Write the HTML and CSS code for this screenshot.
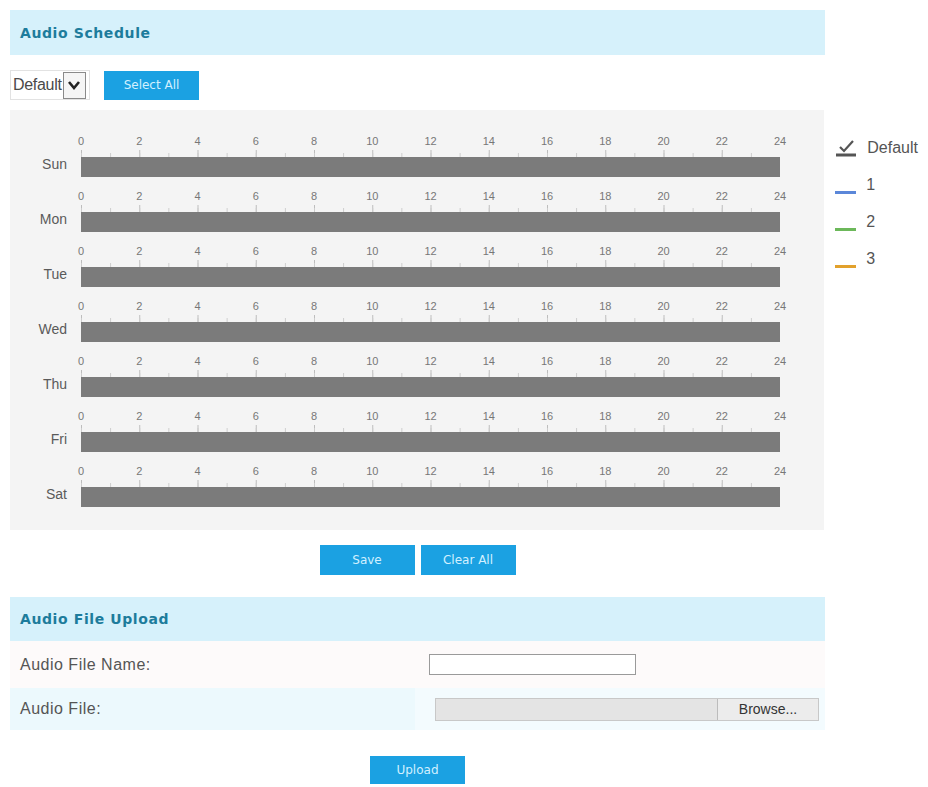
FILE: index.html
```html
<!doctype html>
<html lang="en">
    <head>
        <meta charset="UTF-8" />
        <title>Audio</title>
        <link rel="stylesheet" href="styles.css">
    </head>
    <body>
        <div class="section-head">Audio Schedule</div>

        <div class="toolbar">
            <div class="fake-select">
                <span class="fake-select-text">Default</span>
                <span class="fake-select-arrow">
                    <svg width="14" height="10" viewBox="0 0 14 10"><polyline points="2,2 7,8 12,2" fill="none" stroke="#222" stroke-width="2.6"/></svg>
                </span>
            </div>
            <button class="btn">Select All</button>
        </div>

        <div class="schedule-wrap">
            <div class="schedule">
                <div class="day">
                    <div class="scale"><span>0</span><span>2</span><span>4</span><span>6</span><span>8</span><span>10</span><span>12</span><span>14</span><span>16</span><span>18</span><span>20</span><span>22</span><span>24</span></div>
                    <div class="ticks"></div>
                    <div class="day-name">Sun</div>
                    <div class="bar"></div>
                </div>
                <div class="day">
                    <div class="scale"><span>0</span><span>2</span><span>4</span><span>6</span><span>8</span><span>10</span><span>12</span><span>14</span><span>16</span><span>18</span><span>20</span><span>22</span><span>24</span></div>
                    <div class="ticks"></div>
                    <div class="day-name">Mon</div>
                    <div class="bar"></div>
                </div>
                <div class="day">
                    <div class="scale"><span>0</span><span>2</span><span>4</span><span>6</span><span>8</span><span>10</span><span>12</span><span>14</span><span>16</span><span>18</span><span>20</span><span>22</span><span>24</span></div>
                    <div class="ticks"></div>
                    <div class="day-name">Tue</div>
                    <div class="bar"></div>
                </div>
                <div class="day">
                    <div class="scale"><span>0</span><span>2</span><span>4</span><span>6</span><span>8</span><span>10</span><span>12</span><span>14</span><span>16</span><span>18</span><span>20</span><span>22</span><span>24</span></div>
                    <div class="ticks"></div>
                    <div class="day-name">Wed</div>
                    <div class="bar"></div>
                </div>
                <div class="day">
                    <div class="scale"><span>0</span><span>2</span><span>4</span><span>6</span><span>8</span><span>10</span><span>12</span><span>14</span><span>16</span><span>18</span><span>20</span><span>22</span><span>24</span></div>
                    <div class="ticks"></div>
                    <div class="day-name">Thu</div>
                    <div class="bar"></div>
                </div>
                <div class="day">
                    <div class="scale"><span>0</span><span>2</span><span>4</span><span>6</span><span>8</span><span>10</span><span>12</span><span>14</span><span>16</span><span>18</span><span>20</span><span>22</span><span>24</span></div>
                    <div class="ticks"></div>
                    <div class="day-name">Fri</div>
                    <div class="bar"></div>
                </div>
                <div class="day">
                    <div class="scale"><span>0</span><span>2</span><span>4</span><span>6</span><span>8</span><span>10</span><span>12</span><span>14</span><span>16</span><span>18</span><span>20</span><span>22</span><span>24</span></div>
                    <div class="ticks"></div>
                    <div class="day-name">Sat</div>
                    <div class="bar"></div>
                </div>
            </div>

            <ul class="legend">
                <li class="legend-default">
                    <svg class="legend-icon" width="22" height="20" viewBox="0 0 22 20"><polyline points="5,9 9,13 18,3" fill="none" stroke="#555" stroke-width="2.2"/><line x1="1" y1="17" x2="21" y2="17" stroke="#555" stroke-width="3"/></svg>
                    <span>Default</span>
                </li>
                <li><span class="legend-line blue"></span><span class="legend-num">1</span></li>
                <li><span class="legend-line green"></span><span class="legend-num">2</span></li>
                <li><span class="legend-line orange"></span><span class="legend-num">3</span></li>
            </ul>
        </div>

        <div class="actions">
            <button class="btn">Save</button>
            <button class="btn">Clear All</button>
        </div>

        <div class="section-head upload-head">Audio File Upload</div>
        <div class="form-row">
            <div class="form-label">Audio File Name:</div>
            <div class="form-value"><input class="text-input" type="text"></div>
        </div>
        <div class="form-row alt">
            <div class="form-label">Audio File:</div>
            <div class="form-value">
                <div class="file-input">
                    <span class="file-path"></span>
                    <span class="file-browse">Browse...</span>
                </div>
            </div>
        </div>

        <div class="actions upload-actions">
            <button class="btn upload-btn">Upload</button>
        </div>
    </body>
</html>
```

FILE: styles.css
```css
body {
    margin: 0;
    padding: 10px;
    font-family: 'Liberation Sans', Arial, sans-serif;
    color: #555;
    background: #fff;
}

.section-head {
    width: 805px;
    height: 45px;
    padding-left: 10px;
    display: flex;
    align-items: center;
    background: #d6f1fb;
    color: #1d7c9c;
    font-family: 'DejaVu Sans', Verdana, sans-serif;
    font-weight: bold;
    font-size: 14px;
    letter-spacing: 0.6px;
}

.toolbar {
    margin-top: 15px;
    display: flex;
    align-items: center;
    gap: 14px;
}

.fake-select {
    width: 76px;
    height: 28px;
    border: 1px solid #e2e2e2;
    display: flex;
    align-items: center;
    padding-left: 2px;
}

.fake-select-text {
    font-size: 16px;
    color: #4a4a4a;
    letter-spacing: -0.3px;
}

.fake-select-arrow {
    margin-left: 1px;
    width: 21px;
    height: 25px;
    border: 1px solid #8a8a8a;
    background: #f5f5f5;
    display: flex;
    align-items: center;
    justify-content: center;
}

.btn {
    width: 95px;
    height: 29px;
    border: none;
    background: #1ba1e2;
    color: #d2f0ff;
    font-family: 'DejaVu Sans', Verdana, sans-serif;
    font-size: 12px;
    padding: 0;
}

/* schedule grid */
.schedule-wrap {
    margin-top: 10px;
    display: flex;
}

.schedule {
    width: 815px;
    background: #f4f4f4;
    padding: 12px 0 23px;
}

.day {
    display: grid;
    grid-template-columns: 71px 699px;
    grid-template-rows: 28px 7px 20px;
}

.scale {
    grid-column: 2;
    grid-row: 1;
    display: flex;
    justify-content: space-between;
    padding-top: 13px;
    font-size: 11px;
    line-height: 12px;
    color: #777;
}

.scale span {
    width: 0;
    display: flex;
    justify-content: center;
    white-space: nowrap;
}

.ticks {
    grid-column: 2;
    grid-row: 2;
    background: linear-gradient(to right, #cdcdcd 1px, transparent 1px) 0 3px / 29.125px 4px repeat-x,
        linear-gradient(to right, #bdbdbd 1px, transparent 1px) 0 0 / 58.25px 7px repeat-x;
}

.day-name {
    grid-column: 1;
    grid-row: 2 / 4;
    display: flex;
    align-items: center;
    justify-content: flex-end;
    padding-right: 14px;
    font-size: 14px;
    color: #5a5a5a;
}

.bar {
    grid-column: 2;
    grid-row: 3;
    background: #7b7b7b;
}

.legend {
    list-style: none;
    margin: 0 0 0 11px;
    padding: 15px 0 0;
}

.legend li {
    height: 37px;
    display: flex;
    align-items: center;
    gap: 10px;
    font-size: 16px;
    color: #555;
}

.legend li.legend-default {
    height: 45px;
}

.legend-line {
    width: 21px;
    height: 3px;
    margin-top: 8px;
}

.legend-num {
    margin-top: -8px;
}

.blue { background: #5b87d9; }
.green { background: #6cb85a; }
.orange { background: #e2a12c; }

.actions {
    width: 815px;
    margin-top: 15px;
    display: flex;
    justify-content: center;
    gap: 6px;
}

.actions .btn {
    height: 30px;
}

/* upload form */
.upload-head {
    margin-top: 22px;
    height: 44px;
}

.form-row {
    width: 815px;
    height: 47px;
    display: flex;
    background: #fdfafa;
}

.form-row.alt {
    height: 42px;
    background: #f3fbfe;
}

.form-label {
    width: 395px;
    padding-left: 10px;
    display: flex;
    align-items: center;
    font-size: 16px;
    color: #555;
    letter-spacing: 0.5px;
}

.form-row.alt .form-label {
    background: #ecf9fd;
}

.form-value {
    flex: 1;
    display: flex;
    align-items: center;
}

.text-input {
    margin-left: 14px;
    width: 205px;
    height: 19px;
    border: 1px solid #9a9a9a;
    padding: 0;
    background: #fff;
}

.file-input {
    margin-left: 20px;
    width: 382px;
    height: 21px;
    display: flex;
    border: 1px solid #c8c8c8;
    background: #e4e4e4;
}

.file-path {
    flex: 1;
}

.file-browse {
    width: 100px;
    border-left: 1px solid #bcbcbc;
    background: #ececec;
    display: flex;
    align-items: center;
    justify-content: center;
    font-size: 14px;
    color: #333;
}

.upload-actions {
    margin-top: 26px;
}

.upload-actions .upload-btn {
    height: 28px;
}
```
